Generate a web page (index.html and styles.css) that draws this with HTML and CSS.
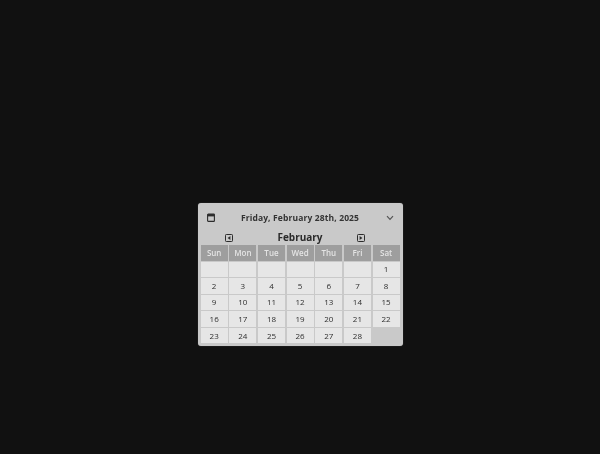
FILE: index.html
```html
<!DOCTYPE html>
<html lang="en">
<head>
    <meta charset="UTF-8">
    <meta name="viewport" content="width=device-width, initial-scale=1.0">
    <title>Date picker</title>
    <link rel="stylesheet" href="styles.css">
</head>
<body>
    <div class="picker">
        <div class="picker_head">
            <svg class="cal_icon" width="8" height="9" viewBox="0 0 8 9">
                <rect x="0.6" y="1.1" width="6.8" height="7.3" rx="0.7" fill="none" stroke="#2c2c2c" stroke-width="1.1"/>
                <rect x="0.6" y="1.1" width="6.8" height="2.3" fill="#2c2c2c"/>
            </svg>
            <span class="picker_date">Friday, February 28th, 2025</span>
            <svg class="chevron" width="8" height="6" viewBox="0 0 8 6">
                <path d="M1 1.2 L4 4.4 L7 1.2" fill="none" stroke="#555" stroke-width="1.2"/>
            </svg>
        </div>
        <div class="month_nav">
            <svg width="8" height="8" viewBox="0 0 8 8">
                <rect x="0.5" y="0.5" width="7" height="7" rx="0.8" fill="none" stroke="#2c2c2c"/>
                <path d="M5.4 1.9 L2.6 4 L5.4 6.1 Z" fill="#2c2c2c"/>
            </svg>
            <span class="month_name">February</span>
            <svg width="8" height="8" viewBox="0 0 8 8">
                <rect x="0.5" y="0.5" width="7" height="7" rx="0.8" fill="none" stroke="#2c2c2c"/>
                <path d="M2.6 1.9 L5.4 4 L2.6 6.1 Z" fill="#2c2c2c"/>
            </svg>
        </div>
        <div class="month_grid">
            <div class="weekday">Sun</div>
            <div class="weekday">Mon</div>
            <div class="weekday">Tue</div>
            <div class="weekday">Wed</div>
            <div class="weekday">Thu</div>
            <div class="weekday">Fri</div>
            <div class="weekday">Sat</div>
            <div class="day"></div>
            <div class="day"></div>
            <div class="day"></div>
            <div class="day"></div>
            <div class="day"></div>
            <div class="day"></div>
            <div class="day">1</div>
            <div class="day">2</div>
            <div class="day">3</div>
            <div class="day">4</div>
            <div class="day">5</div>
            <div class="day">6</div>
            <div class="day">7</div>
            <div class="day">8</div>
            <div class="day">9</div>
            <div class="day">10</div>
            <div class="day">11</div>
            <div class="day">12</div>
            <div class="day">13</div>
            <div class="day">14</div>
            <div class="day">15</div>
            <div class="day">16</div>
            <div class="day">17</div>
            <div class="day">18</div>
            <div class="day">19</div>
            <div class="day">20</div>
            <div class="day">21</div>
            <div class="day">22</div>
            <div class="day">23</div>
            <div class="day">24</div>
            <div class="day">25</div>
            <div class="day">26</div>
            <div class="day">27</div>
            <div class="day">28</div>
        </div>
    </div>
</body>
</html>
```

FILE: styles.css
```css
* {
    margin: 0;
    padding: 0;
    box-sizing: border-box;
}
html, body {
    height: 100%;
}
body {
    background-color: #111111;
    font-family: "Open Sans", "Liberation Sans", sans-serif;
    overflow: hidden;
    padding: 203px 0 0 198px;
}
.picker {
    width: 205px;
    height: 143px;
    background-color: #c9c9c9;
    border-radius: 3px;
    padding: 0 2px;
    box-shadow: 0 0 1px #666666;
    will-change: transform;
}
.picker_head {
    height: 29px;
    display: flex;
    align-items: center;
    padding: 0 7.5px 0 6.5px;
}
.picker_date {
    flex: 1;
    text-align: center;
    font-size: 8.5px;
    font-weight: 700;
    color: #333333;
    letter-spacing: 0.13px;
}
.month_nav {
    height: 13px;
    display: flex;
    align-items: center;
    padding: 0 0 1px 24.5px;
}
.month_name {
    width: 80px;
    margin: -2px 17px 0 27.5px;
    text-align: center;
    font-size: 10px;
    font-weight: 700;
    color: #2a2a2a;
}
.month_grid {
    display: grid;
    grid-template-columns: repeat(7, 27px);
    grid-template-rows: 15.5px repeat(5, 15.6px);
    gap: 1px 1.67px;
    margin-left: 0.67px;
}
.weekday {
    background-color: #9e9e9e;
    color: #e4e4e4;
    font-size: 8px;
    font-weight: 600;
    padding-bottom: 1px;
    display: flex;
    align-items: center;
    justify-content: center;
}
.day {
    background-color: #e6e6e6;
    color: #2e2e2e;
    font-size: 8px;
    padding-bottom: 1px;
    display: flex;
    align-items: center;
    justify-content: center;
}
```
